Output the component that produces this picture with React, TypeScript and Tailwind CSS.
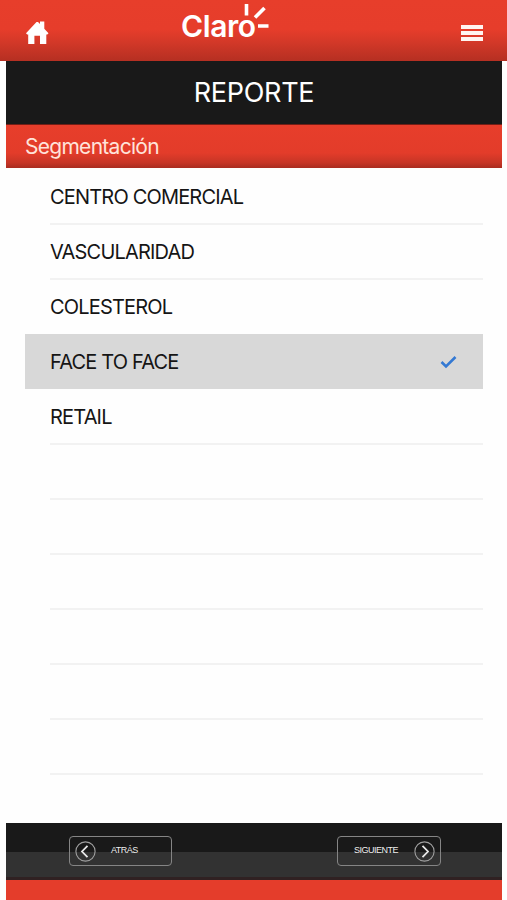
import React from 'react';

const options = ['CENTRO COMERCIAL', 'VASCULARIDAD', 'COLESTEROL', 'FACE TO FACE', 'RETAIL', '', '', '', '', '', ''];
const selected = 3;

function HomeIcon() {
  return (
    <svg className="h-[23px] w-[23px]" viewBox="0 0 23 23" fill="#fff">
      <path d="M0 12.200 10.500 1h1.500l2 2V.600h4.300v7.200l4.200 4.400-1.200 1.300H20.300V23h-6.300v-8.200H8.400V23H2.200v-9.500H1.200z" />
    </svg>
  );
}

function Logo() {
  return (
    <div className="relative h-[61px] w-[90px] text-[30px] font-semibold leading-[30px] tracking-[-0.4px] text-white">
      <span className="block pt-[11px] pl-[1px]">Claro</span>
      <svg className="absolute top-0 left-0 h-[40px] w-[90px]" viewBox="0 0 90 40" stroke="#fff" strokeWidth="3.600">
        <path d="M66.500 4v11.500M75 17.500l9.500-9.500M78 26h10.500" />
      </svg>
    </div>
  );
}

function Arrow({ flip = false }: { flip?: boolean }) {
  return (
    <svg className={flip ? 'h-[21px] w-[21px] rotate-180' : 'h-[21px] w-[21px]'} viewBox="0 0 21 21" fill="none">
      <circle cx="10.500" cy="10.500" r="9.600" stroke="#a0a0a0" strokeWidth="1.100" />
      <path d="M12.500 4.800 7 10.500l5.500 5.700" stroke="#e8e8e8" strokeWidth="1.800" />
    </svg>
  );
}

export default function App() {
  return (
    <div className="flex h-[900px] w-[507px] flex-col overflow-hidden bg-[#fefefe] font-['Inter',sans-serif]">
      <header className="flex h-[61px] shrink-0 bg-[linear-gradient(#e73e2b_0%,#e63d2b_48%,#d23828_70%,#b52f22_100%)]">
        <div className="w-[180px] pt-[21px] pl-[26px]"><HomeIcon /></div>
        <Logo />
        <div className="flex flex-1 flex-col items-end gap-[2px] pt-[25px] pr-[24px]">
          <i className="h-[4px] w-[22px] bg-[#fff5f1]" />
          <i className="h-[4px] w-[22px] bg-[#fff5f1]" />
          <i className="h-[4px] w-[22px] bg-[#fff5f1]" />
        </div>
      </header>
      <main className="mr-[5px] ml-[6px] flex flex-1 flex-col">
        <h1 className="flex h-[63px] items-center justify-center bg-[#191919] pt-[2px] text-[27px] tracking-[-0.3px] text-white">REPORTE</h1>
        <h2 className="flex h-[44px] items-center border-t border-[#741e16] bg-[linear-gradient(#e73e2b_0%,#e33c2a_65%,#c63526_88%,#a92c20_100%)] pl-[19px] text-[21px] tracking-[-0.72px] text-[#ffe3da]">Segmentación</h2>
        <ul className="flex h-[655px] flex-col pt-[1px] pr-[19px] pl-[19px]">
          {options.map((label, i) => (
            <li key={i} className={i === selected ? 'flex h-[55px] shrink-0 bg-[#d8d8d8] pl-[25px]' : 'flex h-[55px] shrink-0 pl-[25px]'}>
              <div className={i === selected || i === selected - 1 ? 'flex flex-1 items-center justify-between pr-[26px]' : '-mb-px flex flex-1 items-center border-b-2 border-[#f2f2f2] pt-[1px]'}>
                <span className="text-[20px] tracking-[-0.82px] text-[#151515]">{label}</span>
                {i === selected && (
                  <svg className="h-[14px] w-[17px]" viewBox="0 0 17 14" fill="none" stroke="#3479d3" strokeWidth="2.600">
                    <path d="m1.500 7 4.500 4.500L15.500 2" />
                  </svg>
                )}
              </div>
            </li>
          ))}
        </ul>
        <footer className="flex h-[57px] shrink-0 items-start justify-between border-b-[3px] border-[#302122] bg-[linear-gradient(#191919_0_29px,#323232_29px)] pt-[13px] pr-[61px] pl-[63px]">
          <button className="flex h-[30px] w-[103px] items-center rounded-[4px] border border-[#858585] pl-[5px] font-['Liberation_Sans',Arial,sans-serif] text-[9px] text-[#eeeeee]">
            <Arrow /><span className="ml-[15px] tracking-[-0.5px]">ATRÁS</span>
          </button>
          <button className="flex h-[30px] w-[104px] items-center justify-between rounded-[4px] border border-[#858585] pr-[5px] pl-[16px] font-['Liberation_Sans',Arial,sans-serif] text-[9px] text-[#eeeeee]">
            <span className="tracking-[-0.5px]">SIGUIENTE</span><Arrow flip />
          </button>
        </footer>
        <div className="flex-1 bg-[#e43d2b]" />
      </main>
    </div>
  );
}
